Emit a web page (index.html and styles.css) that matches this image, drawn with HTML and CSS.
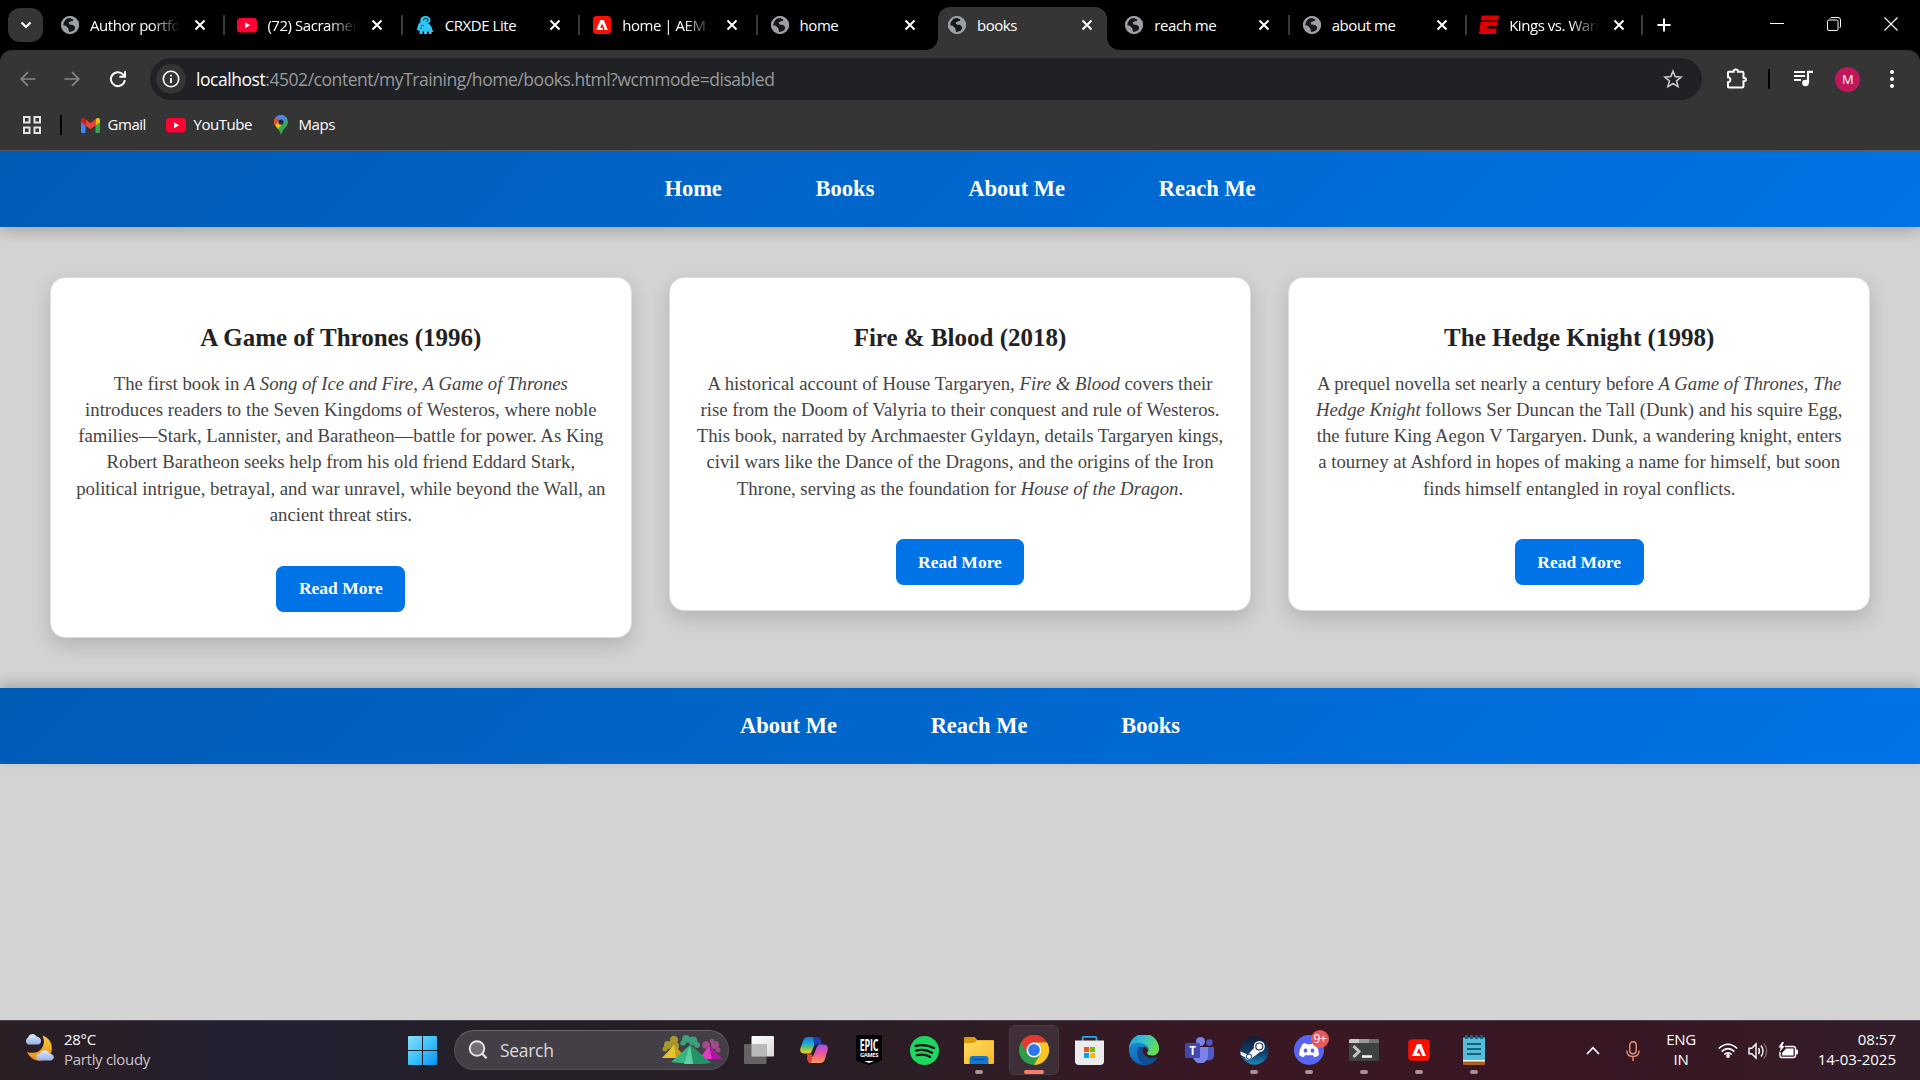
FILE: index.html
```html
<!DOCTYPE html>
<html lang="en">
<head>
<meta charset="utf-8">
<title>books</title>
<link rel="stylesheet" href="styles.css">
</head>
<body>
<svg class="defs" width="0" height="0">
  <defs>
    <symbol id="globe" viewBox="0 0 20 20">
      <circle cx="10" cy="10" r="9" fill="#9aa0a6"/>
      <path d="M11.500 2.200 6.500 3.200 3.600 7.600 3.200 10.200l2.600.6 2.600 2.600.6 3.600 2.300-.2 3-1.600 1-3-2.200-2.200-3.600-.5-1-1.800 2.600-1.500 2-.4.200-1.600-2.300-.4z" fill="#151617"/>
      <circle cx="10" cy="10" r="8" fill="none" stroke="#9aa0a6" stroke-width="2"/>
    </symbol>
    <symbol id="youtube" viewBox="0 0 20 20">
      <rect x="0" y="3" width="20" height="14.500" rx="3.600" fill="#ff0033"/>
      <path d="M8 7.200v6l5.200-3z" fill="#fff"/>
    </symbol>
    <symbol id="adobe" viewBox="0 0 20 20">
      <rect x="1" y="1" width="18" height="18" rx="3.400" fill="#fa0f00"/>
      <path d="M8.200 5h3.600l4 10h-3L10.100 8.400l-1.900 4.400h2.200l.8 2.200H4.200z" fill="#fff"/>
    </symbol>
    <symbol id="close" viewBox="0 0 12 12">
      <path d="M1.500 1.500l9 9M10.500 1.500l-9 9" stroke="#fff" stroke-width="2" fill="none"/>
    </symbol>
  </defs>
</svg>

<header class="browser">
  <div class="tabstrip">
    <span class="tab-search"><svg width="12" height="8" viewBox="0 0 12 8"><path d="M1.500 1.500 6 6l4.500-4.500" fill="none" stroke="#fff" stroke-width="2.200"/></svg></span>
    <div class="tab"><svg class="favicon"><use href="#globe"/></svg><span class="tab-title fade">Author portfolio</span><svg class="tab-close"><use href="#close"/></svg></div>
    <div class="tab"><svg class="favicon"><use href="#youtube"/></svg><span class="tab-title fade">(72) Sacramento</span><svg class="tab-close"><use href="#close"/></svg></div>
    <div class="tab"><svg class="favicon" viewBox="0 0 20 20"><path d="M1.500 14.500q1-1 1.500-4c.3-1.700 1-2.500 2.500-3C4.500 3.500 7 1 10.500 1c3 0 5 1.800 5 4.300 0 2-1.400 3.200-3 3.200 3 .8 4.500 3 4.700 6l1.300 2-2 1V19h-2.500v-2.200H12V19H9v-2.500H7.500V19H4.500v-3z" fill="#2fc4f2"/><path d="M8.500 5.500c0-1.500 1-2.200 2.200-2.200S13 4 13 5.200c0 1-.8 1.500-1.600 1.500M6 10.500h2.500M5 13h2" fill="none" stroke="#064d78" stroke-width="1.200"/></svg><span class="tab-title">CRXDE Lite</span><svg class="tab-close"><use href="#close"/></svg></div>
    <div class="tab"><svg class="favicon"><use href="#adobe"/></svg><span class="tab-title fade">home | AEM Sites</span><svg class="tab-close"><use href="#close"/></svg></div>
    <div class="tab no-sep"><svg class="favicon"><use href="#globe"/></svg><span class="tab-title">home</span><svg class="tab-close"><use href="#close"/></svg></div>
    <div class="tab active no-sep"><svg class="favicon"><use href="#globe"/></svg><span class="tab-title">books</span><svg class="tab-close"><use href="#close"/></svg></div>
    <div class="tab"><svg class="favicon"><use href="#globe"/></svg><span class="tab-title">reach me</span><svg class="tab-close"><use href="#close"/></svg></div>
    <div class="tab"><svg class="favicon"><use href="#globe"/></svg><span class="tab-title">about me</span><svg class="tab-close"><use href="#close"/></svg></div>
    <div class="tab last"><svg class="favicon" viewBox="0 0 20 20"><path d="M2.500.5h17.500l-.8 5H1.800zM1.600 7h17l-.8 4.200H8l-.3 2.300h10l-.9 5.500H0z" fill="#d00"/></svg><span class="tab-title fade">Kings vs. Warriors</span><svg class="tab-close"><use href="#close"/></svg></div>
    <svg class="new-tab" width="14" height="14" viewBox="0 0 14 14"><path d="M7 .5v13M.5 7h13" stroke="#fff" stroke-width="2"/></svg>
    <div class="window-controls">
      <svg width="14" height="14" viewBox="0 0 14 14"><path d="M0 6.500h14" stroke="#fff"/></svg>
      <svg width="14" height="14" viewBox="0 0 14 14"><rect x=".5" y="3" width="10.500" height="10.500" rx="1.500" fill="none" stroke="#fff"/><path d="M3 1.500Q3.500.5 5 .5h6q2.500 0 2.500 2.500v6q0 1.500-1 2" fill="none" stroke="#fff"/></svg>
      <svg width="14" height="14" viewBox="0 0 14 14"><path d="M.5.5l13 13M13.500.5l-13 13" stroke="#fff" stroke-width="1.100"/></svg>
    </div>
  </div>
  <div class="toolbar">
    <svg class="back" width="16" height="16" viewBox="0 0 16 16"><path d="M15.500 8H1.500M8 1.200 1.200 8 8 14.800" fill="none" stroke="#868686" stroke-width="1.700"/></svg>
    <svg class="forward" width="16" height="16" viewBox="0 0 16 16"><path d="M.5 8h14M8 1.200 14.800 8 8 14.800" fill="none" stroke="#868686" stroke-width="1.700"/></svg>
    <svg class="reload" width="18" height="18" viewBox="0 0 18 18"><path d="M15.800 10.200A7 7 0 1 1 14.200 4.600L15.800 6.300M16 1.200v5.600h-5.600" fill="none" stroke="#fff" stroke-width="2"/></svg>
    <div class="omnibox">
      <span class="site-info"><svg width="18" height="18" viewBox="0 0 18 18"><circle cx="9" cy="9" r="7.700" fill="none" stroke="#fff" stroke-width="1.600"/><path d="M9 8v5M9 4.800v1.800" stroke="#fff" stroke-width="1.800"/></svg></span>
      <span class="url"><b>localhost</b>:4502/content/myTraining/home/books.html?wcmmode=disabled</span>
      <svg width="20" height="20" viewBox="0 0 20 20"><path d="M10 2.200l2.200 5.400 5.900.5-4.500 3.800 1.400 5.700L10 14.500l-5 3.100 1.400-5.700-4.500-3.800 5.900-.5z" fill="none" stroke="#c7c7c7" stroke-width="1.600"/></svg>
    </div>
    <svg class="extensions" width="22" height="22" viewBox="0 0 22 22"><path d="M2.800 3.800h4.800c-.2-1.500.8-2.300 2.200-2.300s2.400.8 2.200 2.300h4.200q1.300 0 1.300 1.300v4.600c2 0 2.500.8 2.500 1.800s-.5 1.800-2.500 1.800v5q0 1.300-1.300 1.300H2.800q-.8 0-.8-.8v-4.600c3 0 3.200-5 0-5V4.600q0-.8.8-.8z" fill="none" stroke="#fff" stroke-width="2"/></svg>
    <span class="divider"></span>
    <svg class="media" width="21" height="18" viewBox="0 0 21 18"><path d="M1 2h11M1 6h11M1 10h7" stroke="#fff" stroke-width="2"/><circle cx="12.500" cy="13" r="3.300" fill="#fff"/><path d="M15 13V1.800h5" fill="none" stroke="#fff" stroke-width="2.200"/></svg>
    <span class="avatar">M</span>
    <svg class="menu" width="4" height="18" viewBox="0 0 4 18"><circle cx="2" cy="2" r="2" fill="#fff"/><circle cx="2" cy="9" r="2" fill="#fff"/><circle cx="2" cy="16" r="2" fill="#fff"/></svg>
  </div>
  <div class="bookmarks">
    <svg width="20" height="20" viewBox="0 0 20 20"><g fill="none" stroke="#e3e3e3" stroke-width="2"><rect x="2" y="2" width="5.500" height="5.500"/><rect x="12.500" y="2" width="5.500" height="5.500"/><rect x="2" y="12.500" width="5.500" height="5.500"/><rect x="12.500" y="12.500" width="5.500" height="5.500"/></g></svg>
    <span class="divider"></span>
    <span class="bookmark gmail"><svg width="19" height="15" viewBox="0 0 19 15"><path d="M0 2.500 4.500 6v9H1.300Q0 15 0 13.700z" fill="#4285f4"/><path d="M19 2.500 14.500 6v9h3.200q1.300 0 1.300-1.300z" fill="#34a853"/><path d="M14.500 1.300 16 .3c1.300-.8 3 .2 3 1.700v2L14.500 7.500z" fill="#fbbc04"/><path d="M4.500 1.300 9.500 5l5-3.700v6.200l-5 3.800-5-3.800z" fill="#ea4335"/><path d="M4.500 1.300 3 .3C1.700-.5 0 .5 0 2v2l4.500 3.500z" fill="#c5221f"/></svg><span>Gmail</span></span>
    <span class="bookmark yt"><svg width="20" height="20"><use href="#youtube"/></svg><span>YouTube</span></span>
    <span class="bookmark maps"><svg width="14" height="20" viewBox="0 0 14 20"><path d="M7 0a7 7 0 0 1 7 7c0 5-5.500 6.500-7 13C5.500 13.500 0 12 0 7a7 7 0 0 1 7-7z" fill="#34a853"/><path d="M9 .3 13 3.500 4 13.800 1.500 10.800 0 7l1.500-4L7 0z" fill="#fbbc04"/><path d="M9.200.4 13 3.400 7 10 1.600 2.600A7 7 0 0 1 9.200.4z" fill="#4285f4"/><path d="M1.600 2.500 5.300 5.600 1 10.200A7 7 0 0 1 1.600 2.500z" fill="#ea4335"/><circle cx="7" cy="7" r="2.600" fill="#202a50"/></svg><span>Maps</span></span>
  </div>
</header>

<main class="page">
  <nav class="site-nav top">
    <a>Home</a><a>Books</a><a>About Me</a><a>Reach Me</a>
  </nav>
  <section class="books">
    <article class="card">
      <h3>A Game of Thrones (1996)</h3>
      <p>The first book in <i>A Song of Ice and Fire</i>, <i>A Game of Thrones</i> introduces readers to the Seven Kingdoms of Westeros, where noble families—Stark, Lannister, and Baratheon—battle for power. As King Robert Baratheon seeks help from his old friend Eddard Stark, political intrigue, betrayal, and war unravel, while beyond the Wall, an ancient threat stirs.</p>
      <a class="read-more">Read More</a>
    </article>
    <article class="card">
      <h3>Fire &amp; Blood (2018)</h3>
      <p>A historical account of House Targaryen, <i>Fire &amp; Blood</i> covers their rise from the Doom of Valyria to their conquest and rule of Westeros. This book, narrated by Archmaester Gyldayn, details Targaryen kings, civil wars like the Dance of the Dragons, and the origins of the Iron Throne, serving as the foundation for <i>House of the Dragon</i>.</p>
      <a class="read-more">Read More</a>
    </article>
    <article class="card">
      <h3>The Hedge Knight (1998)</h3>
      <p>A prequel novella set nearly a century before <i>A Game of Thrones</i>, <i>The Hedge Knight</i> follows Ser Duncan the Tall (Dunk) and his squire Egg, the future King Aegon V Targaryen. Dunk, a wandering knight, enters a tourney at Ashford in hopes of making a name for himself, but soon finds himself entangled in royal conflicts.</p>
      <a class="read-more">Read More</a>
    </article>
  </section>
  <footer class="site-nav bottom">
    <a>About Me</a><a>Reach Me</a><a>Books</a>
  </footer>
</main>

<footer class="taskbar">
  <div class="weather">
    <svg width="30" height="30" viewBox="0 0 30 30"><defs><linearGradient id="moon" x1="0" y1="0" x2="0" y2="1"><stop offset="0" stop-color="#f5cc3c"/><stop offset="1" stop-color="#f08a1c"/></linearGradient><linearGradient id="cloud" x1="0" y1="0" x2="0" y2="1"><stop offset="0" stop-color="#dfeaff"/><stop offset="1" stop-color="#94b2ea"/></linearGradient></defs><path d="M18.500 2.500C28 6 30 15 26 22c-5 8-18 8-23-3 7 2 12 .5 15-4 2.500-4 2.500-8 .5-12.500z" fill="url(#moon)"/><path d="M4 11.500a4 4 0 0 1 0-7C5.500 0 11 0 12.500 3.500c4 .5 5.500 4 4 6.500q-1 1.500-3 1.500z" fill="url(#cloud)"/><path d="M16 27.500a3.500 3.500 0 0 1 0-7c2-4.500 8-4 9 0 4 0 6 3.500 4 5.700q-1.200 1.300-3 1.300z" fill="url(#cloud)"/></svg>
    <div class="weather-text"><span>28°C</span><span class="dim">Partly cloudy</span></div>
  </div>
  <div class="apps">
    <svg class="start" width="29" height="29" viewBox="0 0 29 29"><defs><linearGradient id="win" x1="0" y1="0" x2="1" y2="1"><stop offset="0" stop-color="#8be0ff"/><stop offset=".5" stop-color="#3cc3fa"/><stop offset="1" stop-color="#0a92f8"/></linearGradient></defs><path d="M1 0h13v14H0V1q0-1 1-1zM15 0h13q1 0 1 1v13H15zM0 15h14v14H1q-1 0-1-1zM15 15h14v13q0 1-1 1H15z" fill="url(#win)"/></svg>
    <div class="search">
      <svg width="20" height="20" viewBox="0 0 20 20"><circle cx="9" cy="8.500" r="7.300" fill="#726c73" stroke="#e8e6e8" stroke-width="1.900"/><path d="M14 13.500l4.600 4.700" stroke="#e8e6e8" stroke-width="2.200"/></svg>
      <span>Search</span>
      <svg class="peaks" width="60" height="30" viewBox="0 0 60 30"><g fill="#a8952b"><circle cx="12" cy="5" r="4.200"/><circle cx="6" cy="10" r="4"/><circle cx="3" cy="14" r="2.500"/><circle cx="13" cy="11" r="4"/></g><path d="M0 23 12 10l12 13z" fill="#e6c32c"/><path d="M12 10l2 13h10z" fill="#c39d1d"/><g fill="#a3498d"><circle cx="50" cy="6" r="2.200"/><circle cx="44" cy="10" r="3.800"/><circle cx="53" cy="10" r="4"/><circle cx="56" cy="15" r="2.500"/></g><path d="M37 24 47 11l13 13z" fill="#e23bc8"/><path d="M47 11l3 13h10z" fill="#b312a2"/><g fill="#3c9f79"><circle cx="24" cy="4" r="4"/><circle cx="31" cy="6" r="4.500"/><circle cx="21" cy="8" r="2.700"/><circle cx="35" cy="10" r="3"/></g><path d="M9 27 28 10l21 18q-20 2-40-1z" fill="#37b383"/><path d="M28 10l3 19 18-1z" fill="#249467"/><path d="M28 10l-6 19h9z" fill="#5bcf9e"/></svg>
    </div>
    <span class="app"><svg width="30" height="28" viewBox="0 0 30 28"><defs><linearGradient id="tv" x1="0" y1="0" x2="1" y2="1"><stop offset="0" stop-color="#fff"/><stop offset="1" stop-color="#dadada"/></linearGradient></defs><rect x="7.500" width="22.500" height="20.500" rx="1" fill="url(#tv)"/><rect y="8" width="22.500" height="20" rx="1" fill="#6f6f6f" opacity=".85"/><rect x="7.500" y="8" width="15" height="12.500" fill="#b9b9b9"/></svg></span>
    <span class="app"><svg width="28" height="26" viewBox="0 0 28 26"><defs><linearGradient id="cp1" x1="0" y1="0" x2="0" y2="1"><stop offset="0" stop-color="#1379d8"/><stop offset=".4" stop-color="#1ba7d9"/><stop offset=".7" stop-color="#83c452"/><stop offset="1" stop-color="#f4d127"/></linearGradient><linearGradient id="cp2" x1="0" y1="0" x2="0" y2="1"><stop offset="0" stop-color="#a44df2"/><stop offset=".5" stop-color="#ec5697"/><stop offset="1" stop-color="#fb9b4b"/></linearGradient></defs><path d="M8 0h9q2.500 0 3.300 2.500l1 3.500H17q-2 0-2.700 2L12 14q-.8 2.500-3 2.500H3.500Q-.5 16 .2 12L3 4Q4.200 0 8 0z" fill="url(#cp1)"/><path d="M13 0h4q2.500 0 3.300 2.500l1.500 5H17q-2 0-2.700 1z" fill="#1a3fb4"/><path d="M20 26h-9q-2.500 0-3.200-2.500L7 20h4q2 0 2.700-2L16 12q.8-2.500 3-4.500h5.500q4 .8 3.300 5L25 22q-1.200 4-5 4z" fill="url(#cp2)"/><path d="M7 17h3q2 0 2.500 1.500L11 26q-2.500 0-3.200-2.500z" fill="#e5403d"/></svg></span>
    <span class="app"><svg width="26" height="30" viewBox="0 0 26 30"><path d="M1.500 0h23Q26 0 26 1.500V24.500q0 1-1 1.500L13 30 1 26q-1-.5-1-1.500v-23Q0 0 1.500 0z" fill="#030303"/><text x="13" y="16" text-anchor="middle" textLength="18.500" lengthAdjust="spacingAndGlyphs" font-size="16.500" font-weight="700" class="sans" fill="#fff">EPIC</text><text x="13" y="21.600" text-anchor="middle" textLength="18" lengthAdjust="spacingAndGlyphs" font-size="5" font-weight="700" class="sans" fill="#fff">GAMES</text><path d="M8 26h10l-5 2z" fill="#fff"/></svg></span>
    <span class="app"><svg width="29" height="29" viewBox="0 0 29 29"><circle cx="14.500" cy="14.500" r="14.500" fill="#1ed760"/><path d="M5.500 10q9.500-2.500 18.500 2M6.200 14.700q8.300-2.300 15.800 2M7 19.200q7-1.700 13 1.600" fill="none" stroke="#191414" stroke-width="2.400" stroke-linecap="round"/></svg></span>
    <span class="app open"><svg width="30" height="27" viewBox="0 0 30 27"><defs><linearGradient id="fd" x1="0" y1="0" x2="1" y2="1"><stop offset="0" stop-color="#ffdc62"/><stop offset="1" stop-color="#f9b824"/></linearGradient></defs><path d="M0 1q0-1 1-1h9.500l3 3H29q1 0 1 1v10H0z" fill="#dc9a0c"/><path d="M0 6h10l3-2.500h16q1 0 1 1V26q0 1-1 1H1q-1 0-1-1z" fill="url(#fd)"/><path d="M5.500 27v-5q0-3 3-3h13q3 0 3 3v5z" fill="#1378cf"/><path d="M8.500 22.500h13" stroke="#0b4c8c" stroke-width="1.200"/></svg></span>
    <span class="app open current"><svg width="30" height="30" viewBox="0 0 30 30"><circle cx="15" cy="15" r="15" fill="#2d9d4a"/><path d="M2 7.500A15 15 0 0 1 28 7.500H15L9 12.500z" fill="#e5392f"/><path d="M2 7.500 8.500 18.700A7.500 7.500 0 0 1 15 7.500z" fill="#e5392f"/><path d="M28 7.500A15 15 0 0 1 15 30l6.500-11.300A7.500 7.500 0 0 0 15 7.500z" fill="#fcc421"/><circle cx="15" cy="15" r="7.500" fill="#fff"/><circle cx="15" cy="15" r="5.900" fill="#2f76ee"/></svg></span>
    <span class="app"><svg width="29" height="29" viewBox="0 0 29 29"><path d="M7.700 6V2q0-1.200 1.200-1.200h11.400q1.200 0 1.200 1.200v4" fill="none" stroke="#26a8ea" stroke-width="1.800"/><path d="M0 4.500h29V25q0 4-4 4H4q-4 0-4-4z" fill="#ececec"/><path d="M9 11h5v5H9z" fill="#f25022"/><path d="M15 11h5v5h-5z" fill="#7fba00"/><path d="M9 17h5v5H9z" fill="#00a4ef"/><path d="M15 17h5v5h-5z" fill="#ffb900"/></svg></span>
    <span class="app"><svg width="30" height="30" viewBox="0 0 30 30"><defs><linearGradient id="ed" x1="0" y1="0" x2="1" y2=".4"><stop offset="0" stop-color="#1b9de2"/><stop offset=".5" stop-color="#35c1d3"/><stop offset="1" stop-color="#62dc52"/></linearGradient><linearGradient id="ed2" x1="0" y1="0" x2=".4" y2="1"><stop offset="0" stop-color="#1b8cd8"/><stop offset="1" stop-color="#0d5fae"/></linearGradient></defs><path d="M0 14A15 15 0 0 1 30 13.500c.2 5-3.500 7-7 7-3 0-5-1-5-2.500 0-1 1.500-1.500 1.500-3.500 0-3-3-4.500-6-4.500z" fill="url(#ed)"/><path d="M0 15c0-6 7-9 12-7 5 1.500 7.500 4 7 7.500-.8-2.500-2.500-3.500-4.500-3.500-4 3 0 10 6 11.500 3 .6 6-.5 8-1.500C26 27 21 30 15 30 6 30 0 23 0 15z" fill="url(#ed2)"/><path d="M9.500 12C6 19 10 27.500 16.500 30 21 30 26 27 28.500 22c-3 2-7 2-10.500 0-4-2.200-6-6.500-3.500-10z" fill="#124d93"/></svg></span>
    <span class="app"><svg width="29" height="26" viewBox="0 0 29 26"><circle cx="15.500" cy="4.500" r="4.500" fill="#7b83eb"/><circle cx="24.500" cy="5.500" r="3.200" fill="#5059c9"/><path d="M19 10h9q1 0 1 1v7.500a5 5 0 0 1-10 0z" fill="#5059c9"/><path d="M8 10h15v9a7.300 7.300 0 0 1-15 0z" fill="#7b83eb"/><rect y="6" width="15" height="15" rx="1.500" fill="#4048ad"/><text x="7.500" y="17.500" text-anchor="middle" class="sans" font-size="11.500" font-weight="700" fill="#fff">T</text></svg></span>
    <span class="app open"><svg width="29" height="29" viewBox="0 0 29 29"><defs><linearGradient id="st" x1="0" y1="0" x2="0" y2="1"><stop offset="0" stop-color="#141a35"/><stop offset=".6" stop-color="#10406f"/><stop offset="1" stop-color="#168ac0"/></linearGradient></defs><circle cx="14.500" cy="14.500" r="14.200" fill="url(#st)"/><path d="M.3 15.500 8 18.500l6.500-7 5 5-7 5q-1.500 3-5 2.500-2-.8-2.500-2.800L.8 19z" fill="#fff"/><circle cx="19.300" cy="10.500" r="5.500" fill="#fff"/><circle cx="19.300" cy="10.500" r="3.500" fill="#fff" stroke="#1b3050" stroke-width="1.200"/><circle cx="9" cy="20.700" r="2.700" fill="none" stroke="#1b3050"/></svg></span>
    <span class="app open"><svg width="30" height="30" viewBox="0 0 30 30"><circle cx="15" cy="15" r="15" fill="#5865f2"/><path d="M11.500 8 8.500 9Q5 14.500 5 20q2 1.800 4.800 2.200l1.100-1.900h8.200l1.100 1.900Q23 21.800 25 20q0-5.500-3.500-11l-3-1-1 1.300h-5z" fill="#fff"/><ellipse cx="11.500" cy="15.700" rx="1.900" ry="2.100" fill="#5865f2"/><ellipse cx="18.500" cy="15.700" rx="1.900" ry="2.100" fill="#5865f2"/></svg><span class="badge">9+</span></span>
    <span class="app open"><svg width="30" height="22" viewBox="0 0 30 22"><rect width="30" height="22" rx="1.500" fill="#404143"/><path d="M1.500 0H10v4H0V1.500Q0 0 1.500 0z" fill="#c9c9c9"/><path d="M10 0h10v4H10z" fill="#9a9a9a"/><path d="M20 0h8.500Q30 0 30 1.500V4H20z" fill="#707070"/><path d="M4.500 7l5.500 5.500L4.500 18" fill="none" stroke="#c4c4c4" stroke-width="3"/><path d="M13 17.500h10" stroke="#f1f1f1" stroke-width="2.600"/></svg></span>
    <span class="app open"><svg width="24" height="24"><use href="#adobe"/></svg></span>
    <span class="app open"><svg width="22" height="30" viewBox="0 0 22 30"><path d="M0 26h22v3q0 1-1 1H1q-1 0-1-1z" fill="#a9611b"/><path d="M0 2.500h22V26H0z" fill="#54bdd9"/><path d="M0 25h22v1.500H0z" fill="#eef8fb"/><path d="M3.500 0v4M8.500 0v4M13.500 0v4M18.500 0v4" stroke="#17627a" stroke-width="2.800"/><path d="M4 9h14M4 14h14M4 19h14" stroke="#14617b" stroke-width="1.800"/></svg></span>
  </div>
  <div class="tray">
    <svg class="chevron" width="14" height="9" viewBox="0 0 14 9"><path d="M1 8l6-6.300L13 8" fill="none" stroke="#fff" stroke-width="1.800"/></svg>
    <svg class="mic" width="14" height="20" viewBox="0 0 14 20"><rect x="3.800" y=".8" width="6.400" height="12" rx="3.200" fill="none" stroke="#ee9273" stroke-width="1.400"/><path d="M.8 9.500q.2 6 6.200 6t6.200-6M7 15.500V20" fill="none" stroke="#ee9273" stroke-width="1.400"/></svg>
    <div class="lang"><span>ENG</span><span>IN</span></div>
    <svg class="wifi" width="20" height="15" viewBox="0 0 20 15"><path d="M.8 5.500q9.200-8.500 18.400 0M3.600 8.600q6.400-6 12.800 0M6.300 11.500q3.700-3.300 7.400 0" fill="none" stroke="#fff" stroke-width="1.600"/><circle cx="10" cy="13" r="1.900" fill="#fff"/></svg>
    <svg class="volume" width="20" height="18" viewBox="0 0 20 18"><path d="M1 6.200h2.800L8 2v14l-4.200-4.200H1z" fill="none" stroke="#fff" stroke-width="1.400"/><path d="M10.500 6q2 3 0 6M13 3.500q4 5.500 0 11" fill="none" stroke="#fff" stroke-width="1.400"/><path d="M15.800 1.500q5.800 7.500 0 15" fill="none" stroke="#80646d" stroke-width="1.300"/></svg>
    <svg class="battery" width="20" height="17" viewBox="0 0 20 17"><path d="M7 4.500h8.500q2 0 2 2v7q0 2-2 2H4q-2 0-2-2V10" fill="none" stroke="#fff" stroke-width="1.400"/><path d="M8 6.500h7.500v7H4V11z" fill="#fff"/><rect x="18" y="7.500" width="2" height="5" rx="1" fill="#fff"/><path d="M4 0 .5 5.500h2.300L1.500 10 6.800 4H4.300L6 0z" fill="#fff"/></svg>
    <div class="clock"><span>08:57</span><span>14-03-2025</span></div>
  </div>
</footer>
</body>
</html>
```
FILE: styles.css
```css
* { box-sizing: border-box; }

body {
  margin: 0;
  width: 1920px;
  height: 1080px;
  overflow: hidden;
  display: flex;
  flex-direction: column;
  background: #d3d3d3;
  font-family: "Liberation Serif", "Times New Roman", serif;
}

svg { display: block; flex: none; }
.defs { position: absolute; }
.sans { font-family: "Open Sans", sans-serif; }

/* Browser chrome */
.browser {
  flex: none;
  height: 151px;
  background: linear-gradient(#000 0 64px, #353535 64px);
  border-bottom: 1px solid #5c5c5c;
  color: #fff;
  font-family: "Open Sans", "Noto Sans", sans-serif;
  font-size: 15px;
  letter-spacing: -0.45px;
}

.tabstrip {
  display: flex;
  align-items: center;
  height: 50px;
  padding-left: 8px;
  background: #000;
}

.tab-search {
  display: flex;
  flex: none;
  align-items: center;
  justify-content: center;
  width: 35px;
  height: 34px;
  margin-right: 4px;
  border-radius: 12px;
  background: #353535;
}

.tab {
  position: relative;
  display: flex;
  flex: none;
  align-items: center;
  width: 177.400px;
  height: 50px;
  padding-left: 13px;
}

.tab.last { width: 176px; }

.tab::after {
  content: "";
  position: absolute;
  right: -1px;
  top: 15px;
  width: 2px;
  height: 20px;
  background: #3a3a3a;
}

.tab.no-sep::after { display: none; }

.favicon { width: 20px; height: 20px; }

.tab-title {
  flex: none;
  width: 91px;
  margin-left: 10px;
  overflow: hidden;
  white-space: nowrap;
}

.tab-title.fade { mask-image: linear-gradient(90deg, #000 62px, transparent 90px); }
.tab-close { width: 12px; height: 12px; margin-left: 13px; }
.tab.active { z-index: 1; }

.tab.active::before {
  content: "";
  position: absolute;
  z-index: -1;
  left: 4px;
  top: 7px;
  width: 169px;
  height: 43px;
  border-radius: 12px 12px 0 0;
  background: #353535;
}

.tab.active.no-sep::after {
  display: block;
  z-index: -1;
  left: -8px;
  right: auto;
  top: 38px;
  width: 193px;
  height: 12px;
  background:
    radial-gradient(circle at 0 0, transparent 11.500px, #353535 12px) 0 0 / 12px 12px no-repeat,
    radial-gradient(circle at 100% 0, transparent 11.500px, #353535 12px) 100% 0 / 12px 12px no-repeat;
}

.new-tab { margin-left: 14.500px; }

.window-controls {
  display: flex;
  gap: 43px;
  margin: -2px 22px 0 auto;
}

.toolbar {
  display: flex;
  align-items: center;
  height: 58px;
  padding-left: 20px;
  border-radius: 12px 12px 0 0;
  background: #353535;
}

.toolbar > * { flex: none; }
.forward { margin-left: 28px; }
.reload { margin-left: 29px; }

.omnibox {
  display: flex;
  align-items: center;
  width: 1552px;
  height: 42px;
  margin-left: 23px;
  padding: 0 19.500px 0 6px;
  border-radius: 21px;
  background: #202124;
}

.site-info {
  display: flex;
  align-items: center;
  justify-content: center;
  width: 30px;
  height: 30px;
  border-radius: 50%;
  background: #353535;
}

.url {
  flex: 1;
  margin-left: 10px;
  font-size: 17.500px;
  color: #989a9d;
}

.url b { font-weight: 400; color: #fff; }
.extensions { margin-left: 23.500px; }
.divider { width: 2px; height: 20px; background: #000; }
.toolbar .divider { margin-left: 20.500px; }
.media { margin-left: 23px; }

.avatar {
  width: 25px;
  height: 25px;
  margin-left: 21px;
  border-radius: 50%;
  background: #c2185b;
  font-size: 13px;
  line-height: 25px;
  text-align: center;
}

.menu { margin-left: 30px; }

.bookmarks {
  display: flex;
  align-items: center;
  height: 34px;
  padding-left: 22px;
}

.bookmarks .divider { margin-left: 18px; }
.bookmark { display: flex; align-items: center; gap: 8px; }
.bookmark > span { margin-top: -2px; }
.bookmark.gmail { width: 85px; margin-left: 18.500px; }
.bookmark.yt { width: 108px; }
.bookmark.maps { gap: 11px; }

/* Web page */
.page { flex: 1; min-height: 0; overflow: hidden; }

.site-nav {
  display: flex;
  align-items: center;
  justify-content: center;
  gap: 93.750px;
  height: 76px;
  background: linear-gradient(135deg, #005bb5, #0073e6);
  color: #fff;
  font-size: 22.500px;
  font-weight: 700;
}

.site-nav.top { box-shadow: 0 5px 12.500px rgba(0, 0, 0, .2); }
.site-nav.bottom { box-shadow: 0 -5px 12.500px rgba(0, 0, 0, .2); }

.books {
  display: grid;
  grid-template-columns: repeat(3, 1fr);
  gap: 37.500px;
  align-items: start;
  padding: 50px;
}

.card {
  display: flex;
  flex-direction: column;
  align-items: center;
  padding: 25px;
  border: 1px solid #ddd;
  border-radius: 15px;
  background: #fff;
  box-shadow: 0 7.500px 18.750px rgba(0, 0, 0, .15);
  text-align: center;
}

.card h3 {
  margin: 20.750px 0 18.750px;
  font-size: 25px;
  line-height: 28px;
  color: #222;
}

.card p {
  margin: 0 0 37.500px;
  font-size: 18.750px;
  line-height: 26.250px;
  color: #444;
}

.read-more {
  padding: 12.500px 22.500px;
  border-radius: 7.500px;
  background: #0073e6;
  color: #fff;
  font-size: 17.500px;
  font-weight: 700;
  line-height: 21px;
}

/* Taskbar */
.taskbar {
  flex: none;
  display: flex;
  align-items: center;
  height: 60px;
  border-top: 1px solid #46404a;
  background: linear-gradient(90deg, #2b1e25 0, #2a1e27 100px, #251f30 200px, #222031 310px, #241f29 460px, #291e25 780px, #2f1c25 1000px, #391824 1200px, #381623 1600px, #371a26 1760px, #2f1f2a 1920px);
  color: #fff;
  font-family: "Open Sans", "Noto Sans", sans-serif;
  font-size: 15px;
  letter-spacing: -0.3px;
}

.weather {
  display: flex;
  align-items: center;
  gap: 10px;
  width: 383px;
  padding-left: 24px;
}

.weather svg { margin-top: -5px; }

.weather-text, .lang, .clock {
  display: flex;
  flex-direction: column;
  margin-top: -4px;
  line-height: 20px;
}

.dim { color: #c9c5ca; }
.apps { display: flex; align-items: center; margin-top: -1px; }
.start { margin: 1px 17px 0 25px; }

.search {
  display: flex;
  align-items: center;
  width: 275px;
  height: 40px;
  padding: 0 6px 0 13px;
  border: 1px solid #544e55;
  border-top-color: #6b656b;
  border-radius: 20px;
  background: #443f46;
  color: #dcdadc;
  font-size: 17.500px;
}

.search span { margin-left: 12px; }
.peaks { margin-left: auto; }
.search + .app { margin-left: 5px; }

.app {
  position: relative;
  display: flex;
  align-items: center;
  justify-content: center;
  width: 50px;
  height: 50px;
  margin-right: 5px;
}

.current { border: 1px solid #493a42; border-radius: 6px; background: #3d2e37; }

.open::after {
  content: "";
  position: absolute;
  left: calc(50% - 4px);
  bottom: 1px;
  width: 8px;
  height: 4px;
  border-radius: 2px;
  background: #a4949a;
}

.current.open::after { left: calc(50% - 10px); bottom: 0; width: 20px; background: #f4806a; }

.badge {
  position: absolute;
  left: 27px;
  top: 5px;
  width: 18px;
  height: 18px;
  border-radius: 50%;
  background: #e9575a;
  font-size: 12px;
  line-height: 17px;
  text-align: center;
}

.tray { display: flex; align-items: center; margin-left: auto; padding-right: 24px; }
.mic { margin-left: 26px; }
.lang { width: 40px; margin-left: 21px; text-align: center; }
.wifi { margin-left: 17px; }
.volume { margin-left: 10px; }
.battery { margin-left: 10px; }
.clock { width: 98px; text-align: right; letter-spacing: 0; }
```
